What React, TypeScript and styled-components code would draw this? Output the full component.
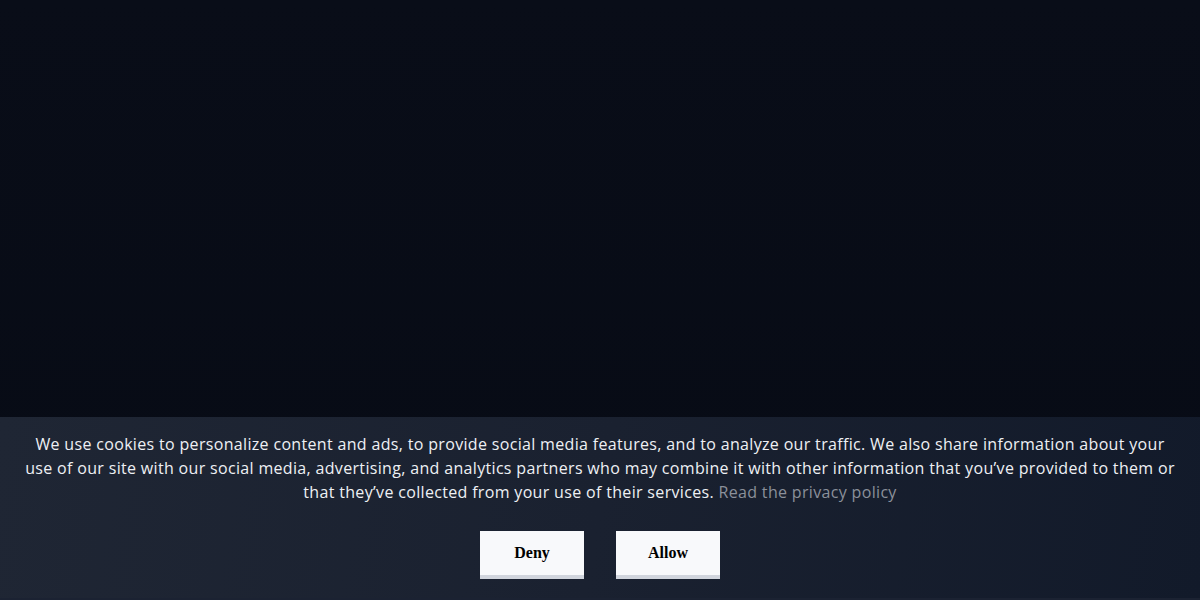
import React from 'react'
import styled, { createGlobalStyle } from 'styled-components'

const Global = createGlobalStyle`
    html, body {
        margin: 0;
        padding: 0;
        height: 100%;
    }
    body {
        background: linear-gradient(180deg, #090d18 0%, #070b15 100%);
    }
    #root {
        height: 100%;
    }
`

const Page = styled.div`
    height: 100vh;
    display: flex;
    flex-direction: column;
    justify-content: flex-end;
`

const Banner = styled.div`
    background: linear-gradient(100deg, #1f2634 0%, #1a2130 50%, #121a2a 100%);
    border-bottom: 2px solid #1b2232;
    padding: 15px 20px 19px;
    display: flex;
    flex-direction: column;
    align-items: center;
    gap: 27px;
`

const Message = styled.p`
    margin: 0;
    color: #eef0f4;
    font-family: "Open Sans", "Liberation Sans", sans-serif;
    font-size: 16px;
    letter-spacing: 0.33px;
    line-height: 24px;
    text-align: center;
`

const Policy = styled.a`
    color: #8b909a;
    text-decoration: none;
`

const Actions = styled.div`
    display: flex;
    gap: 32px;
`

const Button = styled.button`
    width: 104px;
    height: 48px;
    border: none;
    border-bottom: 4px solid #d1d5dd;
    border-radius: 0;
    background: #f8f9fb;
    color: #000;
    font-family: "Liberation Serif", "Times New Roman", serif;
    font-weight: bold;
    font-size: 16px;
    padding: 0;
    cursor: pointer;
`

export default function App() {
    return (
        <>
            <Global />
            <Page>
                <Banner>
                    <Message>
                        We use cookies to personalize content and ads, to provide social media features, and to analyze our traffic. We also share information about your use of our site with our social media, advertising, and analytics partners who may combine it with other information that you’ve provided to them or that they’ve collected from your use of their services.{' '}
                        <Policy href="#">Read the privacy policy</Policy>
                    </Message>
                    <Actions>
                        <Button>Deny</Button>
                        <Button>Allow</Button>
                    </Actions>
                </Banner>
            </Page>
        </>
    )
}
